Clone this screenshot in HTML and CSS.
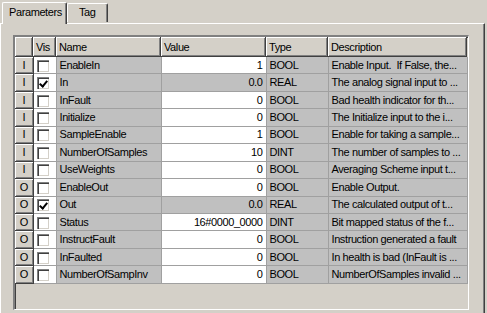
FILE: index.html
```html
<!DOCTYPE html>
<html lang="en">

<head>
    <meta charset="UTF-8">
    <title>Parameters</title>
    <link rel="stylesheet" href="styles.css">
</head>

<body>
    <div class="tabs">
        <div class="tab active">Parameters</div>
        <div class="tab">Tag</div>
    </div>
    <div class="panel">
        <div class="grid-box">
            <table class="grid">
                <colgroup>
                    <col class="c-io">
                    <col class="c-vis">
                    <col class="c-name">
                    <col class="c-value">
                    <col class="c-type">
                    <col class="c-desc">
                </colgroup>
                <thead>
                    <tr>
                        <th></th>
                        <th>Vis</th>
                        <th>Name</th>
                        <th>Value</th>
                        <th>Type</th>
                        <th>Description</th>
                    </tr>
                </thead>
                <tbody>
                    <tr>
                        <td class="io">I</td>
                        <td class="vis"><span class="check"></span></td>
                        <td>EnableIn</td>
                        <td class="value">1</td>
                        <td>BOOL</td>
                        <td class="desc">Enable Input.  If False, the...</td>
                    </tr>
                    <tr>
                        <td class="io">I</td>
                        <td class="vis"><span class="check on"></span></td>
                        <td>In</td>
                        <td class="value ro">0.0</td>
                        <td>REAL</td>
                        <td class="desc">The analog signal input to ...</td>
                    </tr>
                    <tr>
                        <td class="io">I</td>
                        <td class="vis"><span class="check"></span></td>
                        <td>InFault</td>
                        <td class="value">0</td>
                        <td>BOOL</td>
                        <td class="desc">Bad health indicator for th...</td>
                    </tr>
                    <tr>
                        <td class="io">I</td>
                        <td class="vis"><span class="check"></span></td>
                        <td>Initialize</td>
                        <td class="value">0</td>
                        <td>BOOL</td>
                        <td class="desc">The Initialize input to the i...</td>
                    </tr>
                    <tr>
                        <td class="io">I</td>
                        <td class="vis"><span class="check"></span></td>
                        <td>SampleEnable</td>
                        <td class="value">1</td>
                        <td>BOOL</td>
                        <td class="desc">Enable for taking a sample...</td>
                    </tr>
                    <tr>
                        <td class="io">I</td>
                        <td class="vis"><span class="check"></span></td>
                        <td>NumberOfSamples</td>
                        <td class="value">10</td>
                        <td>DINT</td>
                        <td class="desc">The number of samples to ...</td>
                    </tr>
                    <tr>
                        <td class="io">I</td>
                        <td class="vis"><span class="check"></span></td>
                        <td>UseWeights</td>
                        <td class="value">0</td>
                        <td>BOOL</td>
                        <td class="desc">Averaging Scheme input t...</td>
                    </tr>
                    <tr>
                        <td class="io">O</td>
                        <td class="vis"><span class="check"></span></td>
                        <td>EnableOut</td>
                        <td class="value">0</td>
                        <td>BOOL</td>
                        <td class="desc">Enable Output.</td>
                    </tr>
                    <tr>
                        <td class="io">O</td>
                        <td class="vis"><span class="check on"></span></td>
                        <td>Out</td>
                        <td class="value ro">0.0</td>
                        <td>REAL</td>
                        <td class="desc">The calculated output of t...</td>
                    </tr>
                    <tr>
                        <td class="io">O</td>
                        <td class="vis"><span class="check"></span></td>
                        <td>Status</td>
                        <td class="value">16#0000_0000</td>
                        <td>DINT</td>
                        <td class="desc">Bit mapped status of the f...</td>
                    </tr>
                    <tr>
                        <td class="io">O</td>
                        <td class="vis"><span class="check"></span></td>
                        <td>InstructFault</td>
                        <td class="value">0</td>
                        <td>BOOL</td>
                        <td class="desc">Instruction generated a fault</td>
                    </tr>
                    <tr>
                        <td class="io">O</td>
                        <td class="vis"><span class="check"></span></td>
                        <td>InFaulted</td>
                        <td class="value">0</td>
                        <td>BOOL</td>
                        <td class="desc">In health is bad (InFault is ...</td>
                    </tr>
                    <tr>
                        <td class="io">O</td>
                        <td class="vis"><span class="check"></span></td>
                        <td>NumberOfSampInv</td>
                        <td class="value">0</td>
                        <td>BOOL</td>
                        <td class="desc">NumberOfSamples invalid ...</td>
                    </tr>
                </tbody>
            </table>
        </div>
    </div>
</body>

</html>
```

FILE: styles.css
```css
body {
    margin: 0;
    background-color: #d4d0c8;
    font-family: "Liberation Sans", Arial, sans-serif;
    font-size: 11px;
    letter-spacing: -0.4px;
    color: black;
    overflow: hidden;
}

.tabs {
    display: flex;
    align-items: flex-end;
    height: 23px;
    padding-left: 2px;
}

.tab {
    position: relative;
    height: 18px;
    line-height: 17px;
    padding: 0 11px;
    border-top: 1px solid white;
    border-left: 1px solid white;
    border-right: 1px solid #404040;
    box-shadow: inset -1px 0 #808080;
    border-radius: 2px 2px 0 0;
    margin-bottom: 1px;
}

.tab.active {
    height: 21px;
    line-height: 18px;
    padding: 0 6px;
    width: 51px;
    margin-bottom: -1px;
    z-index: 1;
    background-color: #d4d0c8;
}

.panel {
    height: 278px;
    width: 483px;
    border-top: 1px solid white;
    border-left: 1px solid white;
    border-right: 1px solid #404040;
    box-shadow: inset -1px 0 #808080;
    padding-top: 11px;
}

.grid-box {
    margin-left: 12px;
    width: 453px;
    height: 272px;
    border-top: 2px solid #808080;
    border-left: 2px solid #808080;
    border-right: 1px solid #fff;
    border-bottom: 1px solid #fff;
    box-shadow: inset 1px 1px #404040;
    overflow: hidden;
}

.grid {
    border-collapse: collapse;
    table-layout: fixed;
    width: 452px;
}

.c-io { width: 18px; }
.c-vis { width: 23px; }
.c-name { width: 105px; }
.c-value { width: 105px; }
.c-type { width: 62px; }
.c-desc { width: 139px; }

th {
    height: 20px;
    padding: 0 0 0 3px;
    text-align: left;
    font-weight: normal;
    background-color: #d4d0c8;
    box-shadow: inset -1px -1px #404040, inset 1px 1px #fff, inset -2px -2px #808080;
}

td {
    height: 16.45px;
    padding: 0 0 0 3px;
    background-color: #c0c0c0;
    border-right: 1px solid #a0a0a0;
    border-bottom: 1px solid #a0a0a0;
    white-space: pre;
    overflow: hidden;
    line-height: 15px;
}

td.io {
    padding: 0;
    text-align: center;
    background-color: #d4d0c8;
    border-right: 1px solid #404040;
    border-bottom: 1px solid #404040;
    box-shadow: inset 1px 1px #fff, inset -1px -1px #808080;
}

td.vis {
    background-color: white;
    padding: 0 0 0 3px;
}

td.value {
    background-color: white;
    text-align: right;
    padding: 0 3px 0 0;
}

td.value.ro {
    background-color: #c0c0c0;
}

.check {
    display: block;
    position: relative;
    width: 11px;
    height: 11px;
    margin-top: 1px;
    background-color: white;
    border-top: 1px solid #808080;
    border-left: 1px solid #808080;
    box-shadow: inset 1px 1px #404040, inset -1px -1px #d4d0c8;
}

.check.on::after {
    content: "";
    position: absolute;
    left: 3px;
    top: 1px;
    width: 3px;
    height: 6px;
    border-right: 2px solid black;
    border-bottom: 2px solid black;
    transform: rotate(40deg);
}
```
